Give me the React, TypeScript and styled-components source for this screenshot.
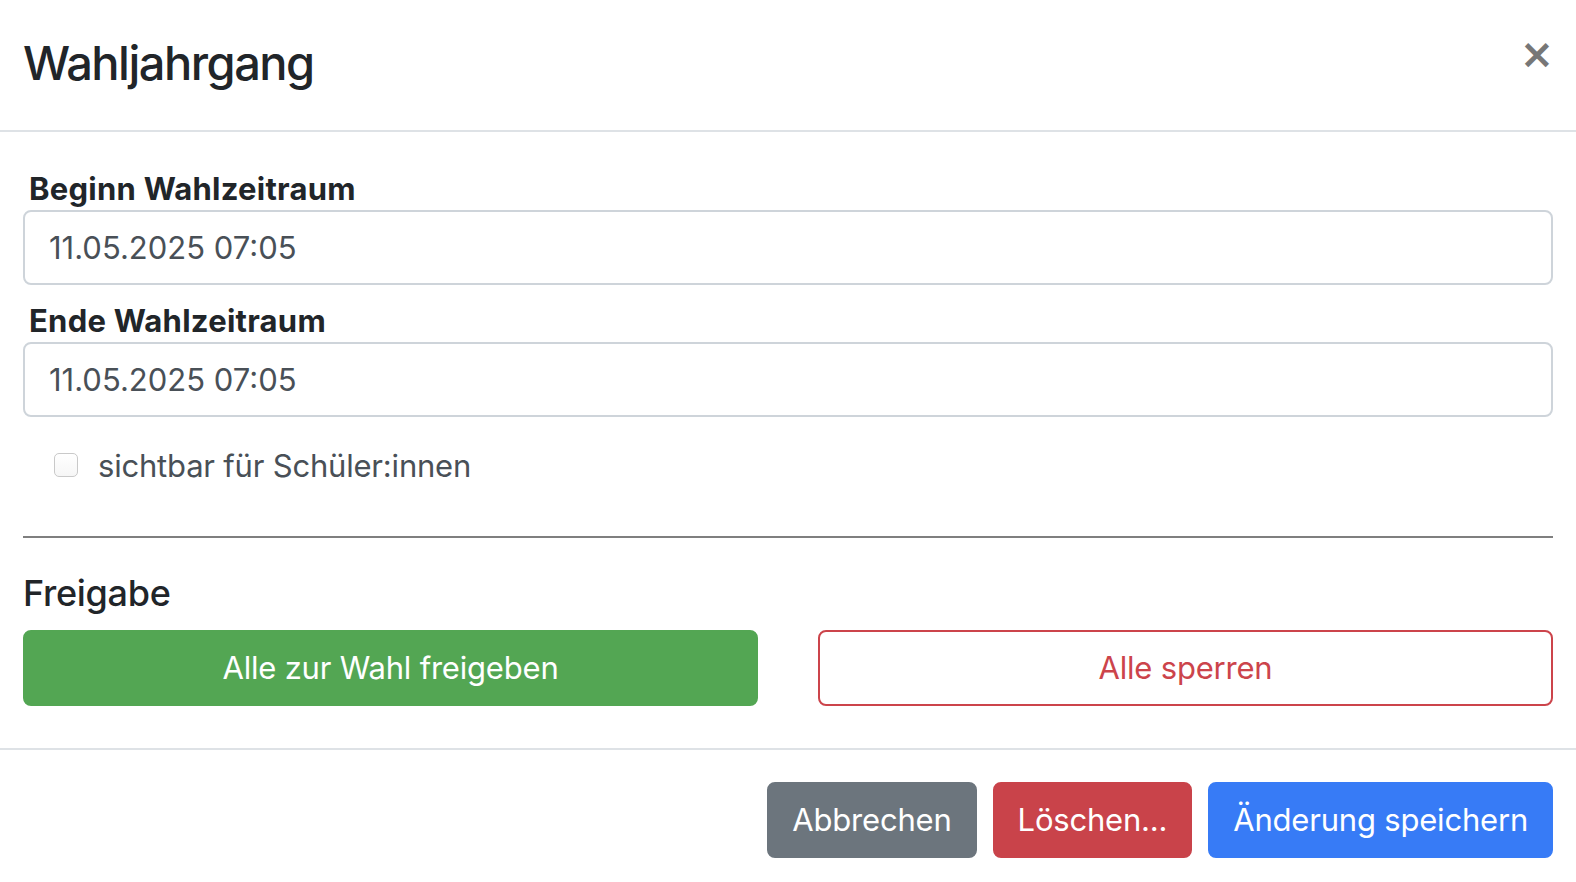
import React from "react";
import styled, { createGlobalStyle } from "styled-components";

const Global = createGlobalStyle`
  html, body {
    margin: 0;
    padding: 0;
    background: #ffffff;
  }
  body {
    font-family: Inter, "Noto Sans", "Liberation Sans", sans-serif;
    color: #212529;
  }
  * { box-sizing: border-box; }
`;

const Modal = styled.div`
  width: 1576px;
  height: 882px;
  background: #fff;
  display: flex;
  flex-direction: column;
`;

const Header = styled.header`
  height: 132px;
  padding: 0 23px;
  display: flex;
  align-items: center;
  justify-content: space-between;
  border-bottom: 2px solid #dee2e6;
`;

const Title = styled.h4`
  margin: 0 0 4px 0;
  font-size: 47px;
  font-weight: 500;
  line-height: 1.2;
  color: #212529;
  letter-spacing: -1.5px;
`;

const Close = styled.button`
  border: 0;
  background: transparent;
  padding: 0;
  margin: 0 -1px 22px 0;
  font-family: "DejaVu Sans", sans-serif;
  font-size: 41px;
  font-weight: 700;
  line-height: 1;
  color: #777777;
  cursor: pointer;
`;

const Body = styled.section`
  padding: 33px 23px 42px;
  display: flex;
  flex-direction: column;
`;

const Label = styled.label<{ $first?: boolean }>`
  display: block;
  margin: ${(p) => (p.$first ? "3px" : "15px")} 0 0 6px;
  font-size: 31px;
  font-weight: 700;
  line-height: 42px;
  color: #212529;
  letter-spacing: 0.25px;
`;

const Input = styled.input`
  display: block;
  width: 100%;
  height: 75px;
  padding: 0 24px;
  font-family: inherit;
  font-size: 31px;
  color: #495057;
  background: #fff;
  border: 2px solid #ced4da;
  border-radius: 8px;
  outline: none;
`;

const CheckRow = styled.label`
  display: flex;
  align-items: center;
  gap: 20px;
  margin: 24px 0 0 31px;
  height: 48px;
  font-size: 31px;
  color: #495057;
  letter-spacing: -0.2px;
`;

const Box = styled.span`
  width: 24px;
  height: 24px;
  border: 1.5px solid #c9c9c9;
  border-radius: 5px;
  background: linear-gradient(#ffffff, #f6f6f6);
  flex: none;
`;

const Rule = styled.hr`
  margin: 47px 0 0;
  border: 0;
  border-top: 2px solid #7f7f7f;
`;

const SectionTitle = styled.h5`
  margin: 32px 0 14px;
  font-size: 36px;
  font-weight: 500;
  line-height: 46px;
  color: #212529;
  letter-spacing: -0.3px;
`;

const Pair = styled.div`
  display: grid;
  grid-template-columns: 1fr 1fr;
  column-gap: 60px;
`;

type Variant = "success" | "outlineDanger" | "secondary" | "danger" | "primary";

const tone: Record<Variant, string> = {
  success: "#53a653",
  outlineDanger: "#cc444b",
  secondary: "#6c757d",
  danger: "#c9434a",
  primary: "#377bf6",
};

const Btn = styled.button<{ $variant: Variant }>`
  height: 76px;
  padding: 0 23px;
  font-family: inherit;
  font-size: 31px;
  line-height: 48px;
  letter-spacing: -0.2px;
  border-radius: 8px;
  border: 2px solid ${(p) => tone[p.$variant]};
  background: ${(p) => (p.$variant === "outlineDanger" ? "#ffffff" : tone[p.$variant])};
  color: ${(p) => (p.$variant === "outlineDanger" ? tone.outlineDanger : "#ffffff")};
  cursor: pointer;
`;

const Footer = styled.footer`
  border-top: 2px solid #dee2e6;
  padding: 32px 23px 0;
  display: flex;
  justify-content: flex-end;
  gap: 16px;
`;

export default function App() {
  return (
    <>
      <Global />
      <Modal>
        <Header>
          <Title>Wahljahrgang</Title>
          <Close aria-label="Schließen">×</Close>
        </Header>
        <Body>
          <Label $first>Beginn Wahlzeitraum</Label>
          <Input defaultValue="11.05.2025 07:05" />
          <Label>Ende Wahlzeitraum</Label>
          <Input defaultValue="11.05.2025 07:05" />
          <CheckRow>
            <Box />
            sichtbar für Schüler:innen
          </CheckRow>
          <Rule />
          <SectionTitle>Freigabe</SectionTitle>
          <Pair>
            <Btn $variant="success">Alle zur Wahl freigeben</Btn>
            <Btn $variant="outlineDanger">Alle sperren</Btn>
          </Pair>
        </Body>
        <Footer>
          <Btn $variant="secondary">Abbrechen</Btn>
          <Btn $variant="danger">Löschen...</Btn>
          <Btn $variant="primary">Änderung speichern</Btn>
        </Footer>
      </Modal>
    </>
  );
}
